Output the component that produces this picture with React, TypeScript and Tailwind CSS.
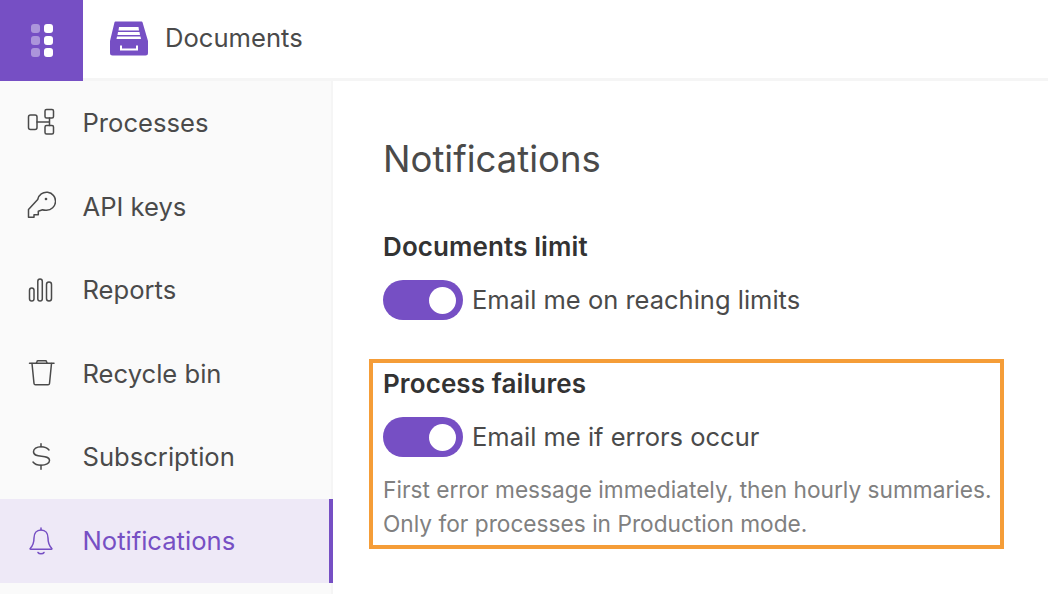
import React from "react";

const Icon = ({ children }: { children: React.ReactNode }) => (
  <svg width="30" height="30" viewBox="0 0 30 30" fill="none" stroke="currentColor" strokeWidth="1.500" strokeLinecap="round" strokeLinejoin="round">
    {children}
  </svg>
);

const ProcessIcon = () => (
  <Icon>
    <rect x="2.500" y="7" width="8.500" height="14.500" rx="2" />
    <rect x="19" y="1.500" width="8.500" height="8.500" rx="1.500" />
    <rect x="19" y="17.500" width="8.500" height="8.500" rx="1.500" />
    <path d="M11 14h12.500M23.500 10v7.500" />
  </Icon>
);

const KeyIcon = () => (
  <Icon>
    <path d="M2.500 18.500v7.800H8v-2.600h4.300v-3.500l4.200-1.500c1 .400 2.500.600 4 .500a9 9 0 1 0-8.800-10.700z" />
    <circle cx="20" cy="8" r="0.600" fill="currentColor" />
  </Icon>
);

const ChartIcon = () => (
  <Icon>
    <rect x="3.500" y="13" width="4.500" height="13" rx="2.250" />
    <rect x="11.800" y="4" width="4.500" height="22" rx="2.250" />
    <rect x="20.500" y="7" width="5" height="19" rx="2.500" />
  </Icon>
);

const TrashIcon = () => (
  <Icon>
    <path d="M3.500 4.300h24.500" />
    <path d="M6 4.500 8 24.500a1.500 1.500 0 0 0 1.500 1.300h12.500a1.500 1.500 0 0 0 1.500-1.300l2-20" />
    <path d="M10.500 4 11 2.500a1 1 0 0 1 1-.800h7.500a1 1 0 0 1 1 .800L21 4" />
  </Icon>
);

const DollarIcon = () => (
  <Icon>
    <path d="M23 8C21.500 6 18.500 4.700 15 4.700c-4.500 0-7.500 2.300-7.500 5.100 0 7.200 16 1.700 16 8.700 0 2.700-3.500 4.800-8.500 4.800-3.500 0-6.500-1.300-8-3.300" />
    <path d="M15 1.700v3M15 23.300v4" />
  </Icon>
);

const BellIcon = () => (
  <Icon>
    <path d="M15 2v2" />
    <path d="M15 4c-4.500 0-7 3.500-7 8 0 5-1.500 8-3.700 10.300-.5.500-.2 1 .4 1h20.600c.6 0 .9-.5.4-1C23.500 20 22 17 22 12c0-4.500-2.500-8-7-8z" />
    <path d="M12 26.500c1 1.600 5 1.600 6 0" />
  </Icon>
);

const DrawerIcon = () => (
  <svg width="38" height="35" viewBox="0 0 38 35">
    <path fill="#764fc4" d="M5.500.500h26a1 1 0 0 1 1 .700L38 20v12a2.500 2.500 0 0 1-2.500 2.500h-33A2.500 2.500 0 0 1 0 32V20L4.500 1.200a1 1 0 0 1 1-.700z" />
    <path fill="#fff" d="M9 6h19.500l.5 3.500H8.500zM8 11h21.500l.5 3H7.500zM7 15.500h23.500l.5 2.500H6.500z" />
    <path fill="none" stroke="#fff" strokeWidth="2" d="M11 24.500v4h16v-4" />
  </svg>
);

const navItems = [
  { label: "Processes", icon: <ProcessIcon /> },
  { label: "API keys", icon: <KeyIcon /> },
  { label: "Reports", icon: <ChartIcon /> },
  { label: "Recycle bin", icon: <TrashIcon /> },
  { label: "Subscription", icon: <DollarIcon /> },
  { label: "Notifications", icon: <BellIcon />, active: true },
];

const Toggle = () => (
  <div className="flex h-10 w-20 shrink-0 items-center justify-end rounded-full bg-[#764fc4] pr-[7px]">
    <div className="h-[27px] w-[27px] rounded-full bg-white" />
  </div>
);

export default function App() {
  return (
    <div className="flex h-[594px] w-[1048px] flex-col overflow-hidden bg-white font-['Inter',sans-serif] text-[#4a4a4a]">
      {/* Header */}
      <header className="flex h-[81px] shrink-0 items-center border-b-[3px] border-[#f5f5f5] bg-white">
        <div className="-mb-[3px] flex h-[81px] w-[83px] items-center justify-center bg-[#764fc4]">
          <div className="grid grid-cols-2 gap-x-[4px] gap-y-[3px]">
            {[0, 1, 2].map((i) => (
              <React.Fragment key={i}>
                <div className="h-[9px] w-[9px] rounded-[3px] bg-white/40" />
                <div className="h-[9px] w-[9px] rounded-[3px] bg-white" />
              </React.Fragment>
            ))}
          </div>
        </div>
        <div className="ml-[27px] flex items-center gap-[17px]">
          <DrawerIcon />
          <span className="-mt-[2px] text-[25.600px]">Documents</span>
        </div>
      </header>

      <div className="flex min-h-0 flex-1">
        {/* Sidebar */}
        <aside className="w-[333px] shrink-0 border-r-2 border-[#f5f5f5] bg-[#fafafa]">
          <nav>
            {navItems.map((item) => (
              <div
                key={item.label}
                className={`-mr-[2px] flex h-[83.600px] items-center ${
                  item.active ? "border-r-[4px] border-[#764fc4] bg-[#eee9f7] text-[#764fc4]" : ""
                }`}
              >
                <div className="ml-[26px] flex w-[30px] justify-center">{item.icon}</div>
                <span className="ml-[26.500px] mt-[1px] text-[25.600px]">{item.label}</span>
              </div>
            ))}
          </nav>
        </aside>

        {/* Content */}
        <main className="flex-1 pl-[36px] pt-[50px]">
          <h1 className="pl-[14px] text-[36.500px] leading-[56px]">Notifications</h1>

          <section className="mt-[42px] pl-[14px]">
            <h2 className="text-[26px] font-semibold leading-[36px] tracking-[0.1px] text-[#333]">Documents limit</h2>
            <div className="mt-[15px] flex items-center gap-[9px]">
              <Toggle />
              <span className="text-[25.500px]">Email me on reaching limits</span>
            </div>
          </section>

          <section className="mt-[39px] h-[190px] w-[635px] border-[4px] border-[#f59d38] pl-[10px] pt-[3px]">
            <h2 className="text-[26px] font-semibold leading-[36px] tracking-[0.1px] text-[#333]">Process failures</h2>
            <div className="mt-[15px] flex items-center gap-[9px]">
              <Toggle />
              <span className="text-[25.500px]">Email me if errors occur</span>
            </div>
            <p className="mt-[16px] text-[22.700px] leading-[34px] text-[#808080]">
              First error message immediately, then hourly summaries.
              <br />
              Only for processes in Production mode.
            </p>
          </section>
        </main>
      </div>
    </div>
  );
}
